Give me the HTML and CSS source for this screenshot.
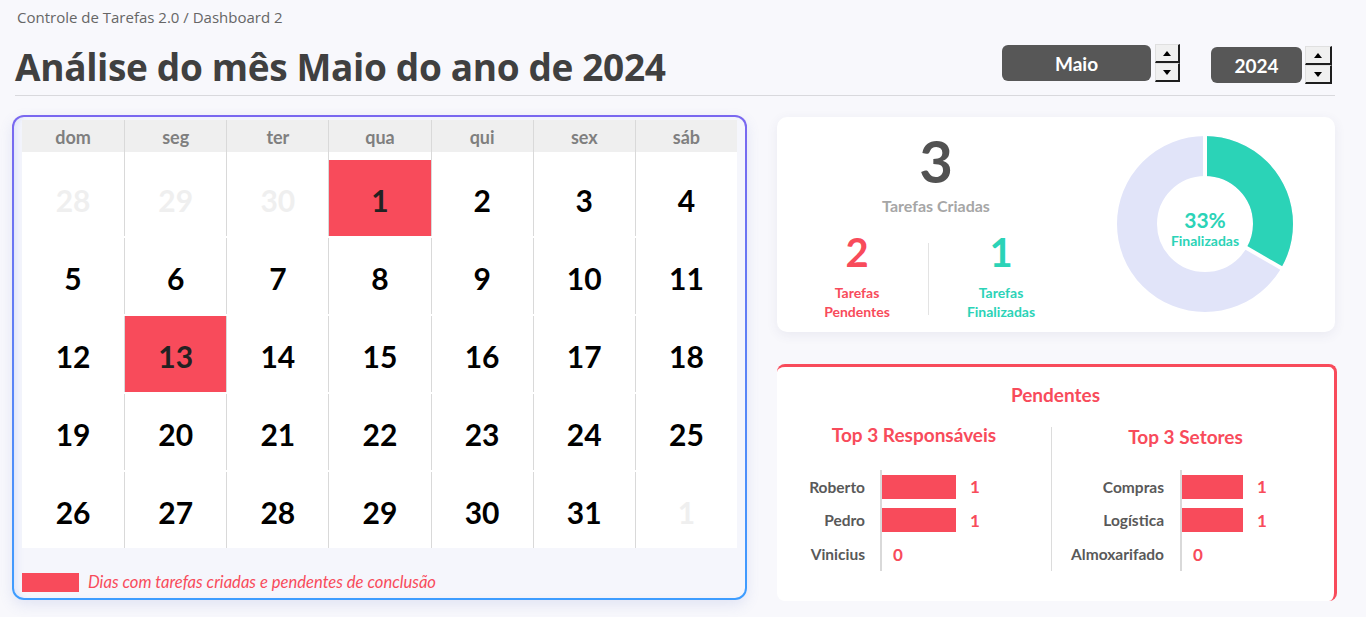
FILE: index.html
```html
<!DOCTYPE html>
<html lang="pt-BR">
<head>
<meta charset="utf-8">
<title>Controle de Tarefas 2.0 - Dashboard 2</title>
<link rel="stylesheet" href="styles.css">
</head>
<body>
<div class="page">
  <div class="crumb">Controle de Tarefas 2.0 / Dashboard 2</div>

  <header class="head">
    <h1 class="title">Análise do mês Maio do ano de 2024</h1>
    <div class="pickers">
      <div class="picker picker-month">
        <div class="pick-box pick-box-month">Maio</div>
        <div class="spin">
          <button class="spin-btn" type="button" aria-label="Mês seguinte"><span class="tri tri-up"></span></button>
          <button class="spin-btn" type="button" aria-label="Mês anterior"><span class="tri tri-down"></span></button>
        </div>
      </div>
      <div class="picker picker-year">
        <div class="pick-box pick-box-year">2024</div>
        <div class="spin">
          <button class="spin-btn" type="button" aria-label="Ano seguinte"><span class="tri tri-up"></span></button>
          <button class="spin-btn" type="button" aria-label="Ano anterior"><span class="tri tri-down"></span></button>
        </div>
      </div>
    </div>
  </header>

  <main class="main">
    <section class="cal-panel">
      <div class="cal-grid">
        <div class="wd">dom</div><div class="wd">seg</div><div class="wd">ter</div><div class="wd">qua</div><div class="wd">qui</div><div class="wd">sex</div><div class="wd">sáb</div>

        <div class="day first muted">28</div>
        <div class="day first muted">29</div>
        <div class="day first muted">30</div>
        <div class="day first pending">1</div>
        <div class="day first">2</div>
        <div class="day first">3</div>
        <div class="day first">4</div>

        <div class="day">5</div><div class="day">6</div><div class="day">7</div><div class="day">8</div><div class="day">9</div><div class="day">10</div><div class="day">11</div>

        <div class="day">12</div><div class="day pending">13</div><div class="day">14</div><div class="day">15</div><div class="day">16</div><div class="day">17</div><div class="day">18</div>

        <div class="day">19</div><div class="day">20</div><div class="day">21</div><div class="day">22</div><div class="day">23</div><div class="day">24</div><div class="day">25</div>

        <div class="day">26</div><div class="day">27</div><div class="day">28</div><div class="day">29</div><div class="day">30</div><div class="day">31</div><div class="day muted">1</div>
      </div>
      <div class="legend">
        <span class="legend-swatch"></span>
        <span class="legend-text">Dias com tarefas criadas e pendentes de conclusão</span>
      </div>
    </section>

    <div class="side">
      <section class="card summary">
        <div class="stats">
          <div class="stat-total">
            <div class="total-num">3</div>
            <div class="total-label">Tarefas Criadas</div>
          </div>
          <div class="stat-split">
            <div class="stat-col stat-pending">
              <div class="stat-num">2</div>
              <div class="stat-label">Tarefas<br>Pendentes</div>
            </div>
            <div class="vsep"></div>
            <div class="stat-col stat-done">
              <div class="stat-num">1</div>
              <div class="stat-label">Tarefas<br>Finalizadas</div>
            </div>
          </div>
        </div>
        <div class="donut">
          <svg width="176" height="176" viewBox="0 0 176 176">
            <circle cx="88" cy="88" r="68" fill="none" stroke="#e1e4f9" stroke-width="40"/>
            <circle cx="88" cy="88" r="68" fill="none" stroke="#2bd3b7" stroke-width="40"
                    stroke-dasharray="142.42 427.26" transform="rotate(-90 88 88)"/>
            <line x1="88" y1="0" x2="88" y2="44" stroke="#ffffff" stroke-width="4"/>
            <line x1="126.1" y1="110" x2="166.8" y2="133.5" stroke="#ffffff" stroke-width="4"/>
          </svg>
          <div class="donut-label">
            <span class="donut-pct">33%</span>
            <span class="donut-cap">Finalizadas</span>
          </div>
        </div>
      </section>

      <section class="card pending-card">
        <h2 class="pending-title">Pendentes</h2>
        <div class="tops">
          <div class="top-col top-resp">
            <h3 class="top-title">Top 3 Responsáveis</h3>
            <div class="chart">
              <div class="bar-row"><span class="bar-label">Roberto</span><span class="bar-track"><span class="bar" style="width:74px"></span><span class="bar-val">1</span></span></div>
              <div class="bar-row"><span class="bar-label">Pedro</span><span class="bar-track"><span class="bar" style="width:74px"></span><span class="bar-val">1</span></span></div>
              <div class="bar-row"><span class="bar-label">Vinicius</span><span class="bar-track"><span class="bar" style="width:0"></span><span class="bar-val zero">0</span></span></div>
            </div>
          </div>
          <div class="top-col top-sect">
            <h3 class="top-title">Top 3 Setores</h3>
            <div class="chart">
              <div class="bar-row"><span class="bar-label">Compras</span><span class="bar-track"><span class="bar" style="width:61px"></span><span class="bar-val">1</span></span></div>
              <div class="bar-row"><span class="bar-label">Logística</span><span class="bar-track"><span class="bar" style="width:61px"></span><span class="bar-val">1</span></span></div>
              <div class="bar-row"><span class="bar-label">Almoxarifado</span><span class="bar-track"><span class="bar" style="width:0"></span><span class="bar-val zero">0</span></span></div>
            </div>
          </div>
        </div>
      </section>
    </div>
  </main>
</div>
</body>
</html>
```

FILE: styles.css
```css
* { box-sizing: border-box; }

body {
  margin: 0;
  background: #f8f8fc;
  font-family: Lato, "Noto Sans", sans-serif;
  color: #222;
}

.page {
  width: 1366px;
  height: 617px;
  padding: 7px 0 0 12px;
  overflow: hidden;
}

/* ---------- top bar ---------- */
.crumb {
  font-family: "Open Sans", "Noto Sans", sans-serif;
  font-size: 15px;
  line-height: 20px;
  color: #666;
  padding-left: 5px;
}

.head {
  margin-left: 3px;
  width: 1320px;
  height: 69px;
  display: flex;
  align-items: flex-end;
  justify-content: space-between;
  border-bottom: 1px solid #d9d9dd;
  padding-bottom: 4px;
}

.title {
  margin: 0;
  font-family: "Open Sans", "Noto Sans", sans-serif;
  font-weight: 700;
  font-size: 37px;
  line-height: 48px;
  color: #404040;
  letter-spacing: -0.35px;
}

.pickers {
  display: flex;
  align-items: flex-end;
  gap: 31px;
  margin-right: 3px;
  margin-bottom: 7px;
}

.picker { display: flex; align-items: center; gap: 4px; }
.picker-month { margin-bottom: 2px; }
.picker-year { gap: 3px; }

.pick-box {
  height: 36px;
  border-radius: 6px;
  background: #575757;
  color: #fff;
  font-weight: 700;
  font-size: 19px;
  display: flex;
  align-items: center;
  justify-content: center;
}
.pick-box-month { width: 149px; }
.pick-box-year { width: 91px; }

.spin {
  display: flex;
  flex-direction: column;
  width: 25px;
}
.picker-year .spin { width: 27px; }

.spin-btn {
  height: 19px;
  padding: 0;
  margin: 0;
  background: #f0f0f0;
  border-top: 1px solid #e0e0e0;
  border-left: 1px solid #e0e0e0;
  border-right: 2px solid #1e1e1e;
  border-bottom: 2px solid #1e1e1e;
  display: flex;
  align-items: center;
  justify-content: center;
}

.tri { width: 0; height: 0; border-left: 4px solid transparent; border-right: 4px solid transparent; }
.tri-up { border-bottom: 5px solid #000; }
.tri-down { border-top: 5px solid #000; }

/* ---------- layout ---------- */
.main {
  display: flex;
  gap: 30px;
  margin-top: 19px;
}

/* ---------- calendar ---------- */
.cal-panel {
  width: 735px;
  height: 485px;
  border: 2px solid transparent;
  border-radius: 12px;
  background:
    linear-gradient(#f5f6fc, #f5f6fc) padding-box,
    linear-gradient(180deg, #7a68f0 0%, #5a84f7 55%, #3d9dff 100%) border-box;
  box-shadow: 0 5px 14px rgba(90, 110, 200, 0.14), inset 6px 0 8px -5px rgba(120, 150, 240, 0.25);
  padding: 3px 8px 0 8px;
}

.cal-grid {
  width: 715px;
  display: grid;
  grid-template-columns: repeat(7, 1fr);
  background: #fff;
}

.wd {
  height: 32px;
  background: #efefef;
  color: #7f7f7f;
  font-weight: 700;
  font-size: 18px;
  display: flex;
  align-items: center;
  justify-content: center;
  padding-top: 1px;
}

.wd:not(:nth-child(7n+1)),
.day:not(:nth-child(7n+1)) {
  border-left: 1px solid #d9d9d9;
}

.day {
  height: 76px;
  margin-top: 2px;
  padding-top: 4px;
  display: flex;
  align-items: center;
  justify-content: center;
  font-weight: 700;
  font-size: 30px;
  color: #000;
}
.day.first {
  margin-top: 0;
  height: 84px;
  padding-top: 12px;
}
.day.muted { color: #efefef; }
.day.pending {
  color: #222;
  background: linear-gradient(#f84b5b, #f84b5b) no-repeat left bottom / 100% 76px;
}

.legend {
  display: flex;
  align-items: center;
  gap: 9px;
  margin-top: 24px;
}
.legend-swatch {
  width: 57px;
  height: 19px;
  background: #f84b5b;
}
.legend-text {
  font-style: italic;
  font-size: 16.6px;
  color: #f84b5b;
}

/* ---------- side cards ---------- */
.side {
  width: 560px;
  display: flex;
  flex-direction: column;
  gap: 32px;
  padding-top: 2px;
}

.card {
  background: #fff;
  border-radius: 10px;
}

.summary {
  width: 558px;
  height: 215px;
  display: flex;
  padding-left: 8px;
  box-shadow: 0 3px 12px rgba(60, 70, 120, 0.08);
}

.stats {
  width: 288px;
  padding-top: 15px;
}

.stat-total { text-align: center; padding-left: 14px; }
.total-num {
  font-weight: 700;
  font-size: 58px;
  line-height: 58px;
  color: #525252;
}
.total-label {
  margin-top: 7px;
  font-weight: 700;
  font-size: 16px;
  line-height: 18px;
  color: #a6a6a6;
}

.stat-split {
  display: flex;
  margin-top: 28px;
}
.stat-col {
  width: 144px;
  text-align: center;
}
.vsep {
  width: 1px;
  height: 72px;
  background: #e3e3e3;
  margin-left: -1px;
}
.stat-num {
  font-weight: 700;
  font-size: 40px;
  line-height: 22px;
  margin-top: -2px;
}
.stat-label {
  margin-top: 20px;
  font-weight: 700;
  font-size: 14px;
  line-height: 19px;
}
.stat-pending { color: #f84b5b; }
.stat-done { color: #2bd3b7; }

.donut {
  position: relative;
  width: 176px;
  height: 176px;
  margin: 19px 42px 0 auto;
}
.donut svg { display: block; }
.donut-label {
  position: absolute;
  inset: 0;
  padding-top: 10px;
  display: flex;
  flex-direction: column;
  align-items: center;
  justify-content: center;
  gap: 2px;
  color: #2bd3b7;
  font-weight: 700;
}
.donut-pct { font-size: 21px; line-height: 22px; }
.donut-cap { font-size: 14px; line-height: 16px; }

.pending-card {
  width: 560px;
  height: 237px;
  border-top: 3px solid #f84b5b;
  border-right: 3px solid #f84b5b;
  border-radius: 8px;
  padding-top: 16px;
}

.pending-title {
  margin: 0;
  text-align: center;
  font-size: 19px;
  line-height: 24px;
  font-weight: 700;
  color: #f84b5b;
}

.tops {
  display: flex;
  margin-top: 20px;
}
.top-col { display: flex; flex-direction: column; }
.top-resp { width: 275px; border-right: 1px solid #dcdcdc; }
.top-sect { flex: 1; padding-right: 15px; }

.top-title {
  margin: 0;
  text-align: center;
  font-size: 19px;
  line-height: 16px;
  font-weight: 700;
  color: #f84b5b;
}
.top-sect .top-title { margin-top: 2px; margin-bottom: -2px; }

.chart { margin-top: 27px; }

.bar-row {
  display: flex;
  align-items: center;
  height: 33.67px;
}
.bar-label {
  text-align: right;
  font-weight: 700;
  font-size: 15.5px;
  color: #595959;
}
.top-resp .bar-label { width: 88px; margin-right: 15px; }
.top-sect .bar-label { width: 112px; margin-right: 16px; }

.bar-track {
  align-self: stretch;
  display: flex;
  align-items: center;
  border-left: 2px solid #d9d9d9;
}
.bar {
  height: 24px;
  background: #f84b5b;
}
.bar-val {
  margin-left: 14px;
  font-weight: 700;
  font-size: 17px;
  color: #f84b5b;
}
.bar-val.zero { margin-left: 11px; }
```
